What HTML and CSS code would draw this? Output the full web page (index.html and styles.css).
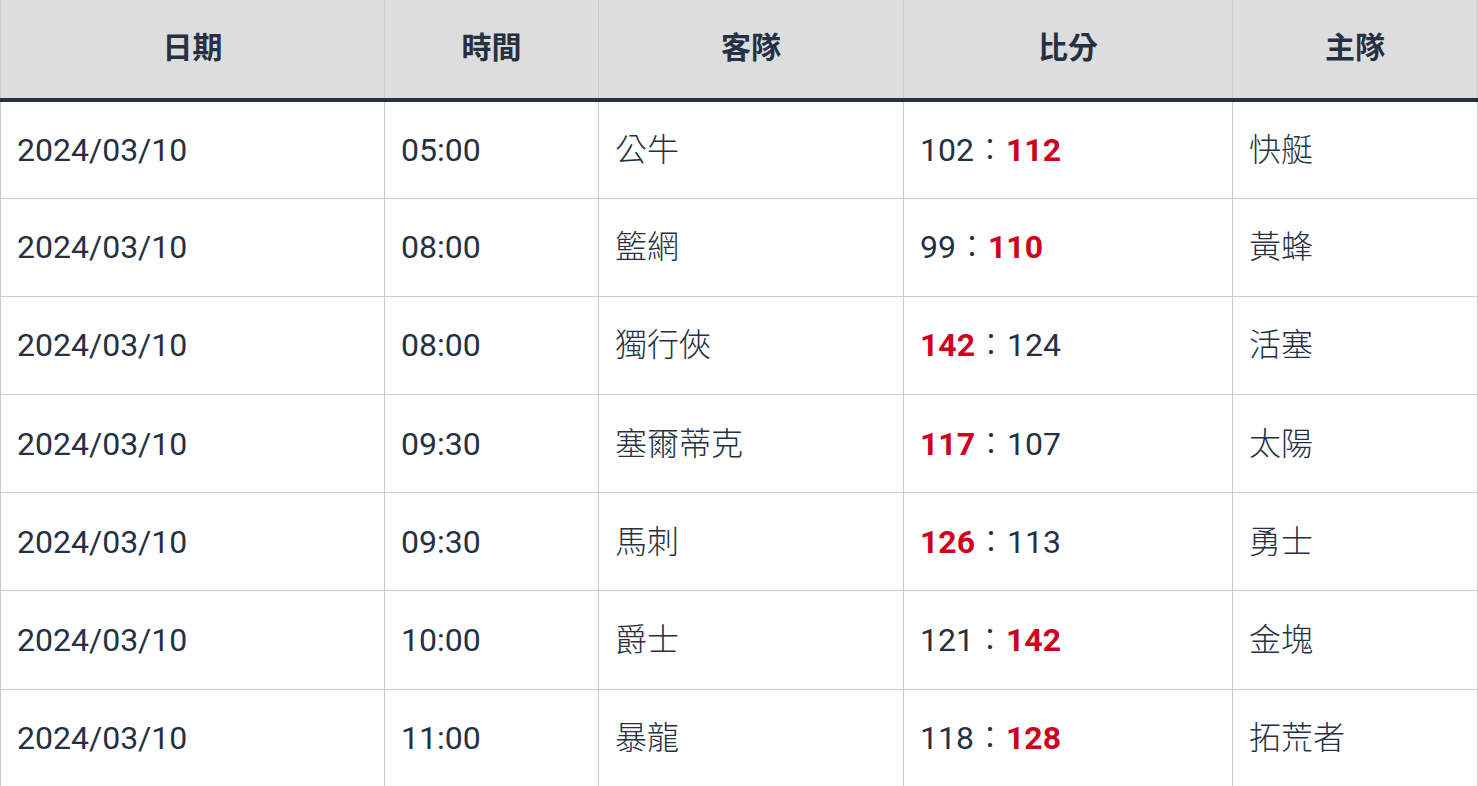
FILE: index.html
```html
<!DOCTYPE html>
<html lang="zh-Hant">
<head>
<meta charset="utf-8">
<title>賽程比分</title>
<link rel="stylesheet" href="styles.css">
</head>
<body>
<table class="scores">
  <colgroup>
    <col class="c-date"><col class="c-time"><col class="c-away"><col class="c-score"><col class="c-home">
  </colgroup>
  <thead>
    <tr><th>日期</th><th>時間</th><th>客隊</th><th>比分</th><th>主隊</th></tr>
  </thead>
  <tbody>
    <tr><td>2024/03/10</td><td>05:00</td><td class="team">公牛</td><td>102<span class="colon">：</span><b class="win">112</b></td><td class="team">快艇</td></tr>
    <tr><td>2024/03/10</td><td>08:00</td><td class="team">籃網</td><td>99<span class="colon">：</span><b class="win">110</b></td><td class="team">黃蜂</td></tr>
    <tr><td>2024/03/10</td><td>08:00</td><td class="team">獨行俠</td><td><b class="win">142</b><span class="colon">：</span>124</td><td class="team">活塞</td></tr>
    <tr><td>2024/03/10</td><td>09:30</td><td class="team">塞爾蒂克</td><td><b class="win">117</b><span class="colon">：</span>107</td><td class="team">太陽</td></tr>
    <tr><td>2024/03/10</td><td>09:30</td><td class="team">馬刺</td><td><b class="win">126</b><span class="colon">：</span>113</td><td class="team">勇士</td></tr>
    <tr><td>2024/03/10</td><td>10:00</td><td class="team">爵士</td><td>121<span class="colon">：</span><b class="win">142</b></td><td class="team">金塊</td></tr>
    <tr><td>2024/03/10</td><td>11:00</td><td class="team">暴龍</td><td>118<span class="colon">：</span><b class="win">128</b></td><td class="team">拓荒者</td></tr>
  </tbody>
</table>
</body>
</html>
```
FILE: styles.css
```css
html, body {
  margin: 0;
  padding: 0;
  background: #fff;
}
body {
  font-family: Roboto, "Noto Sans CJK TC", sans-serif;
  color: #253142;
}
.scores {
  width: 1477px;
  border-collapse: collapse;
  table-layout: fixed;
}
.c-date { width: 384px; }
.c-time { width: 214px; }
.c-away { width: 305px; }
.c-score { width: 329px; }
.c-home { width: 245px; }
.scores th {
  background: #dddddd;
  height: 96px;
  padding: 0 0 2px;
  font-size: 30px;
  line-height: 40px;
  font-weight: 700;
  text-align: center;
  border-left: 1px solid #cccccc;
  border-right: 1px solid #cccccc;
  border-bottom: 4px solid #253142;
}
.scores tbody tr {
  height: 98.2px;
}
.scores td {
  padding: 0 16px;
  font-size: 32px;
  line-height: 48px;
  text-align: left;
  border: 1px solid #cccccc;
  white-space: nowrap;
}
.scores tbody tr:first-child td {
  border-top: none;
}
.team {
  font-weight: 300;
}
.colon {
  font-weight: 300;
}
.win {
  color: #d0021b;
  font-weight: 700;
}
```
